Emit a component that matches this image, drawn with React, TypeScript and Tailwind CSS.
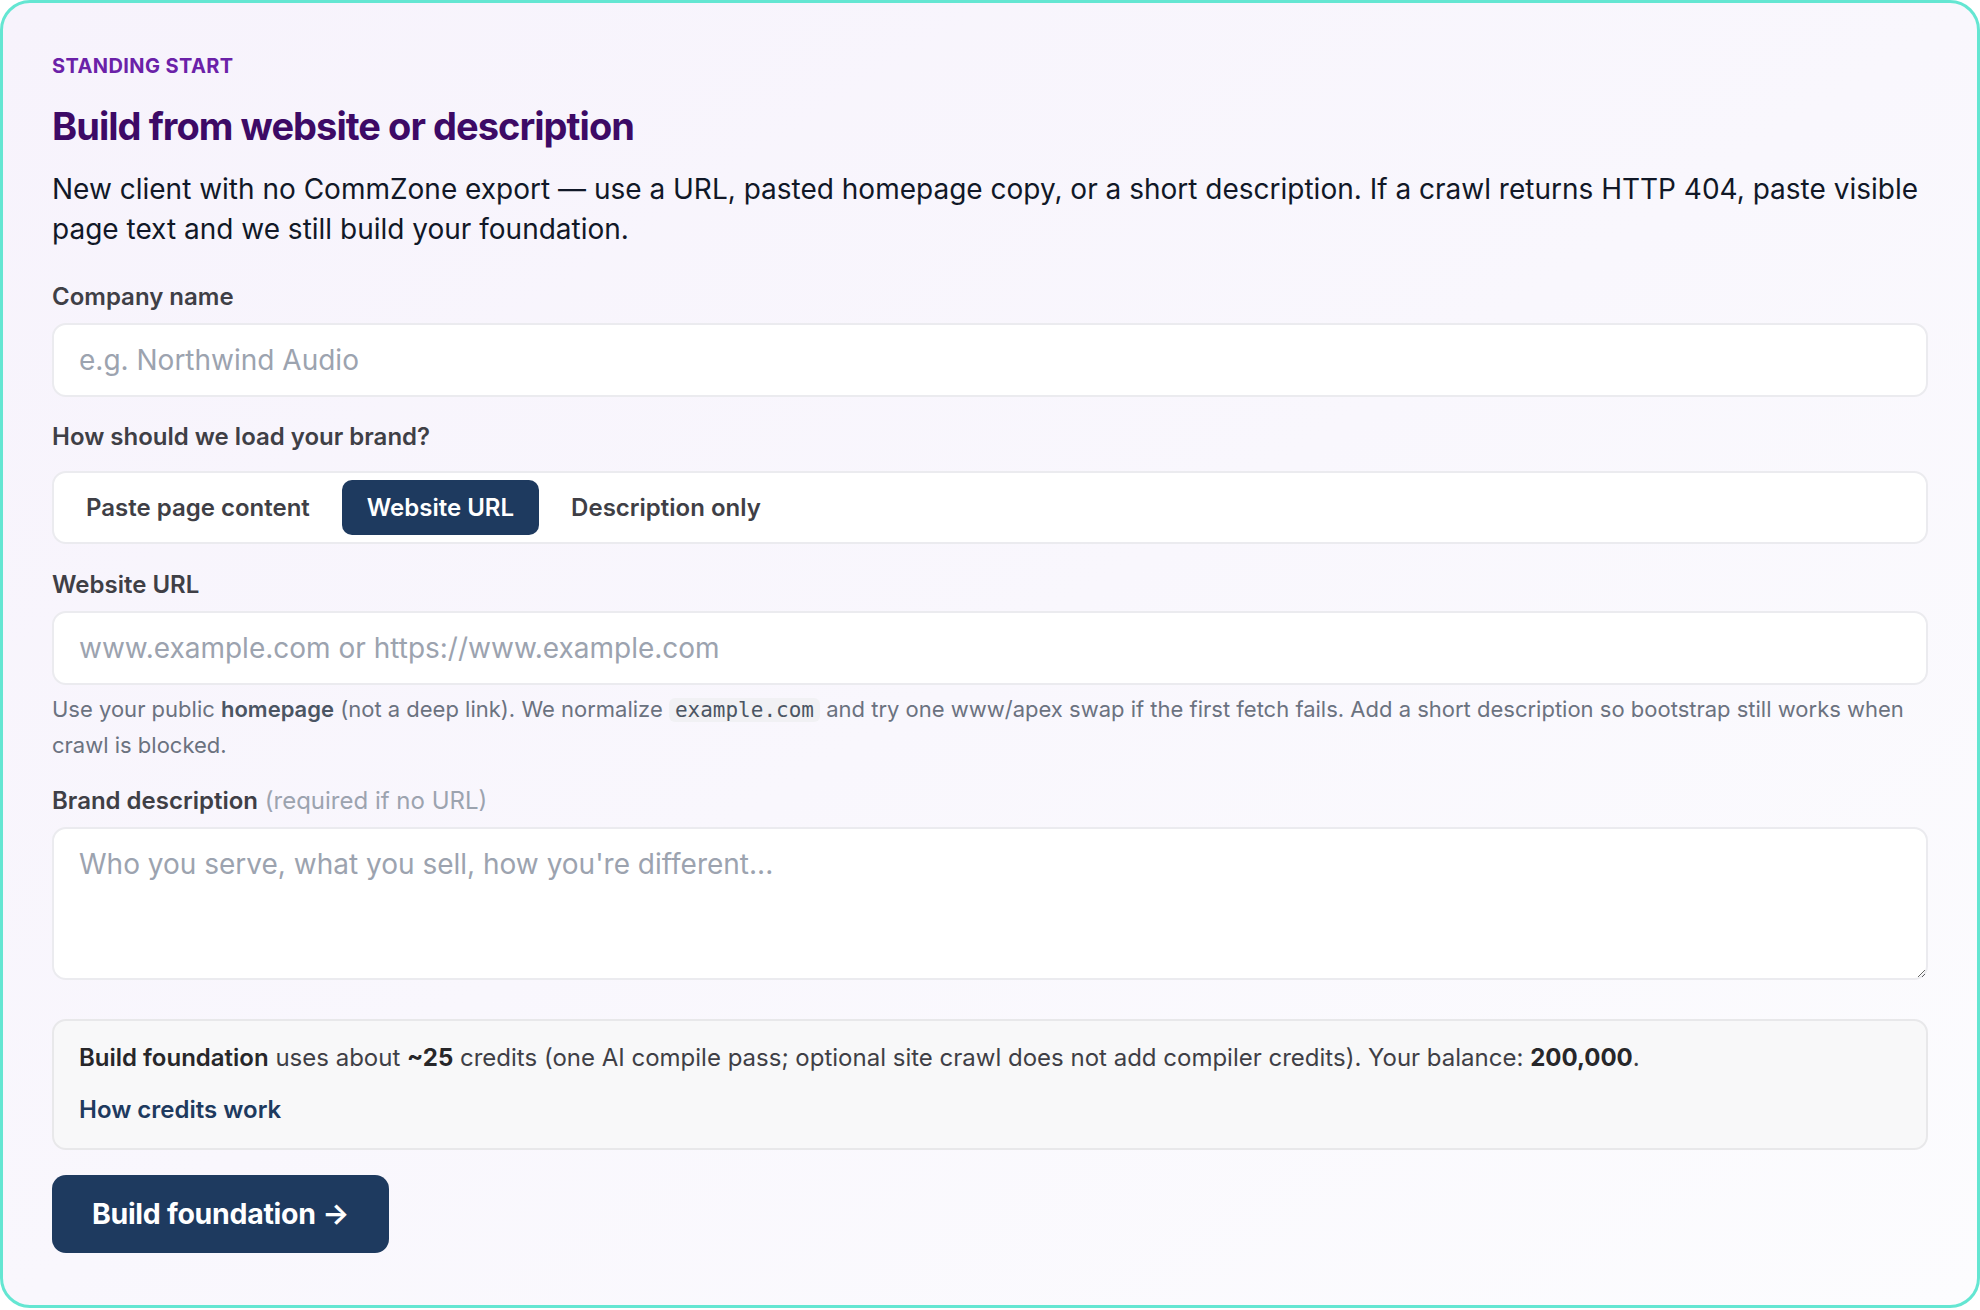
import { useState } from 'react';

const modes = ['Paste page content', 'Website URL', 'Description only'] as const;

type Mode = (typeof modes)[number];

export default function App() {
  const [mode, setMode] = useState<Mode>('Website URL');

  return (
    <div className="min-h-screen bg-white font-['Inter','Noto_Sans',sans-serif]">
      <section className="flex min-h-[1308px] flex-col rounded-[30px] border-[3px] border-[#64e6d2] bg-gradient-to-br from-[#f7f3fc] via-[#f9f7fd] to-[#fcfcfe] px-[49px] pb-[50px] pt-[49px]">
        <p className="text-[20px] font-bold uppercase leading-[28px] tracking-[0.02em] text-[#6b21a8]">
          Standing start
        </p>
        <h1 className="mt-[22px] text-[38px] font-bold leading-[48px] tracking-[-0.025em] text-[#3d0a66]">
          Build from website or description
        </h1>
        <p className="mt-[19px] text-[28px] leading-[40px] text-[#111827]">
          New client with no CommZone export — use a URL, pasted homepage copy, or a short description. If a crawl
          returns HTTP 404, paste visible page text and we still build your foundation.
        </p>

        <label className="mt-[32px] text-[24px] font-semibold leading-[32px] text-[#3f3f46]" htmlFor="company">
          Company name
        </label>
        <input
          className="mt-[10px] h-[74px] w-full rounded-[14px] border-2 border-[#ebebef] bg-white px-[25px] text-[28px] text-[#111827] outline-none placeholder:text-[#9ca3af]"
          id="company"
          placeholder="e.g. Northwind Audio"
        />

        <p className="mt-[24px] text-[24px] font-semibold leading-[32px] text-[#3f3f46]">How should we load your brand?</p>
        <div className="mt-[18px] flex h-[73px] items-center gap-[7px] rounded-[14px] border-2 border-[#ebebef] bg-white px-[7px]">
          {modes.map((m) => (
            <button
              className={
                m === mode
                  ? 'h-[55px] rounded-[10px] bg-[#1e3a5f] px-[25px] text-[24px] font-semibold text-white'
                  : 'h-[55px] rounded-[10px] px-[25px] text-[24px] font-semibold text-[#3f3f46]'
              }
              key={m}
              onClick={() => setMode(m)}
              type="button"
            >
              {m}
            </button>
          ))}
        </div>

        <label className="mt-[25px] text-[24px] font-semibold leading-[32px] text-[#3f3f46]" htmlFor="url">
          Website URL
        </label>
        <input
          className="mt-[10px] h-[74px] w-full rounded-[14px] border-2 border-[#ebebef] bg-white px-[25px] text-[28px] text-[#111827] outline-none placeholder:text-[#9ca3af]"
          id="url"
          placeholder="www.example.com or https://www.example.com"
        />
        <p className="mt-[7px] text-[22px] leading-[35.5px] text-[#6b7280]">
          Use your public <strong className="font-semibold text-[#4b5563]">homepage</strong> (not a deep link). We
          normalize{' '}
          <code className="rounded-[6px] bg-[#f1f1f4] px-[6px] font-['DejaVu_Sans_Mono',monospace] text-[21px] leading-[30px] text-[#4b5563]">
            example.com
          </code>{' '}
          and try one www/apex swap if the first fetch fails. Add a short description so bootstrap still works when
          crawl is blocked.
        </p>

        <label className="mt-[22px] text-[24px] leading-[32px] text-[#3f3f46]" htmlFor="desc">
          <span className="font-semibold">Brand description</span>{' '}
          <span className="text-[#9ca3af]">(required if no URL)</span>
        </label>
        <textarea
          className="mt-[10px] block h-[153px] w-full rounded-[14px] border-2 border-[#ebebef] bg-white px-[25px] py-[17px] text-[28px] leading-[36px] text-[#111827] outline-none placeholder:text-[#9ca3af]"
          id="desc"
          placeholder="Who you serve, what you sell, how you're different..."
        />

        <div className="mt-[39px] rounded-[14px] border-2 border-[#e8e8ea] bg-[#f8f8f9] px-[25px] pb-[21px] pt-[20px] text-[24px] leading-[34px] text-[#3f3f46]">
          <p>
            <strong className="font-semibold text-[#27272a]">Build foundation</strong> uses about{' '}
            <strong className="font-bold text-[#27272a]">~25</strong> credits (one AI compile pass; optional site crawl
            does not add compiler credits). Your balance: <strong className="font-bold text-[#27272a]">200,000</strong>.
          </p>
          <a className="mt-[18px] block font-semibold text-[#1e3a5f]" href="#credits">
            How credits work
          </a>
        </div>

        <div className="mt-[25px]">
          <button
            className="h-[78px] w-[337px] rounded-[14px] bg-[#1e3a5f] text-[28.5px] font-bold tracking-[-0.01em] text-white"
            type="button"
          >
            Build foundation →
          </button>
        </div>
      </section>
    </div>
  );
}
